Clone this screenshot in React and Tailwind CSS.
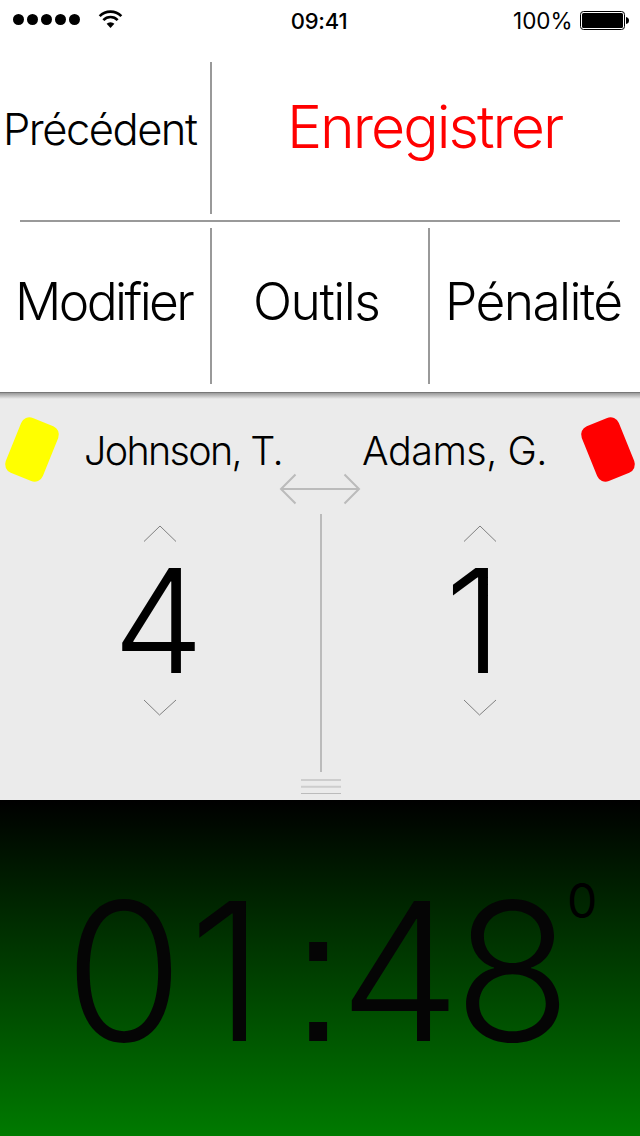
import React from "react";

function Wifi() {
  return (
    <svg width="25" height="19" viewBox="0 0 26 20" className="block">
      <g fill="none" stroke="#000" strokeWidth="2.8">
        <path d="M1.6 6.4 A16.2 16.2 0 0 1 24.4 6.4" />
        <path d="M5.5 10.6 A10.4 10.4 0 0 1 20.5 10.6" />
      </g>
      <path d="M13 19 L8.9 14.6 A5.8 5.8 0 0 1 17.1 14.6 Z" fill="#000" />
    </svg>
  );
}

function Battery() {
  return (
    <svg width="50" height="20" viewBox="0 0 50 20" className="block">
      <rect x="0.5" y="0.5" width="44" height="18" rx="3" fill="#fff" stroke="#000" />
      <rect x="2" y="2" width="41" height="15" rx="1.5" fill="#000" />
      <path d="M46 6 Q49 6.5 49 9.5 Q49 12.500 46 13 Z" fill="#000" />
    </svg>
  );
}

function StatusBar() {
  return (
    <header className="flex h-[62px] w-full items-start">
      <div className="flex w-[239px] items-center pt-[10px] pl-[13px]">
        <div className="flex gap-[3px]">
          {[0, 1, 2, 3, 4].map((i) => (
            <span key={i} className="h-[11px] w-[11px] rounded-full bg-black" />
          ))}
        </div>
        <div className="ml-[18px]">
          <Wifi />
        </div>
      </div>
      <div className="w-[160px] pt-[6px] text-center text-[22px] leading-[30px] font-medium tracking-[-0.2px]">09:41</div>
      <div className="flex w-[241px] pt-[6px] pl-[114px]">
        <span className="w-[67px] text-[22.500px] leading-[30px] font-normal">100%</span>
        <span className="pt-[5px]">
          <Battery />
        </span>
      </div>
    </header>
  );
}

function Chevron({ down }) {
  return (
    <svg width="34" height="18" viewBox="0 0 34 18" className="block">
      <path d={down ? "M1 1 L16.500 16 L33 1" : "M1 16.500 L17 1 L33 16.500"} fill="none" stroke="#808080" strokeWidth="1" />
    </svg>
  );
}

function Score({ value, pad }) {
  return (
    <div className="flex w-[320px] flex-col items-center pt-[15px]">
      <Chevron />
      <div className={"h-[156px] w-full text-[144.500px] leading-[156px] font-light " + pad}>{value}</div>
      <Chevron down />
    </div>
  );
}

export default function App() {
  return (
    <div className="flex h-[1136px] w-[640px] flex-col overflow-hidden bg-white font-['Inter','Liberation_Sans',sans-serif] text-black">
      <StatusBar />

      <section className="flex h-[158px] items-start whitespace-nowrap">
        <button className="h-[134px] w-[210px] pl-[3px] text-left text-[43.500px] leading-[134px] font-light tracking-[-1.5px]">Précédent</button>
        <div className="h-[152px] w-[2px] bg-[#999]" />
        <button className="h-[130px] w-[428px] pl-[75px] text-left text-[59px] leading-[130px] font-light tracking-[-2px] text-[#f00]">Enregistrer</button>
      </section>
      <div className="mx-5 h-[2px] shrink-0 bg-[#999]" />
      <section className="flex h-[170px] shrink-0 items-start pt-[6px] whitespace-nowrap">
        <button className="h-[146px] w-[210px] pl-[15px] text-left text-[51.500px] leading-[146px] font-light tracking-[-2.6px]">Modifier</button>
        <div className="h-[156px] w-[2px] bg-[#999]" />
        <button className="h-[146px] w-[216px] pl-[41px] text-left text-[51.500px] leading-[146px] font-light tracking-[-1.5px]">Outils</button>
        <div className="h-[156px] w-[2px] bg-[#999]" />
        <button className="h-[146px] w-[210px] pl-[15px] text-left text-[51.500px] leading-[146px] font-light tracking-[-1.6px]">Pénalité</button>
      </section>

      <main className="flex h-[408px] shrink-0 flex-col border-t border-[#777] bg-[#ebebeb] bg-linear-to-b/srgb from-[#999] to-[#ebebeb] to-[6px]">
        <div className="flex h-[80px] shrink-0 items-start whitespace-nowrap">
          <div className="flex w-[84px] pt-[27px] pl-[12px]">
            <div className="h-[59px] w-[40px] rotate-[22deg] rounded-[9px] bg-[#ff0]" />
          </div>
          <div className="w-[278px] pt-[28px] text-[39.500px] leading-[60px] font-light tracking-[-1.7px]">Johnson, T.</div>
          <div className="w-[226px] pt-[28px] text-[39.500px] leading-[60px] font-light tracking-[-0.5px]">Adams, G.</div>
          <div className="w-[52px] pt-[27px]">
            <div className="h-[59px] w-[40px] rotate-[-22deg] rounded-[9px] bg-[#f00]" />
          </div>
        </div>
        <div className="flex h-[37px] shrink-0 justify-center">
          <svg width="82" height="32" viewBox="0 0 82 32" className="block">
            <path d="M2 16 H80 M16.500 1.500 L2 16 L16.500 30.500 M65.500 1.500 L80 16 L65.500 30.500" fill="none" stroke="#bbb" strokeWidth="2" />
          </svg>
        </div>
        <div className="relative flex h-[290px] shrink-0">
          <Score value="4" pad="pl-[113px]" />
          <Score value="1" pad="pl-[125px]" />
          <div className="absolute top-[4px] left-[320px] h-[258px] w-[2px] bg-[#bbb]" />
          <svg width="40" height="18" viewBox="0 0 40 18" className="absolute top-[268px] left-[301px] block">
            <path d="M0 2 H40 M0 8.800 H40" fill="none" stroke="#cdcdcd" strokeWidth="2" />
            <path d="M0 15.500 H40" fill="none" stroke="#bbb" strokeWidth="1.2" />
          </svg>
        </div>
      </main>

      <footer className="flex h-[336px] shrink-0 items-start bg-linear-to-b/srgb from-black to-[#007a00] text-[192.500px] leading-[342px] font-light text-[#050505]">
        <span className="ml-[64px] flex w-[120px] justify-center">0</span>
        <span className="flex w-[80px] justify-center pl-[5px]">1</span>
        <span className="flex w-[81px] justify-center pl-[27px] font-['Liberation_Sans',sans-serif] text-[188px] leading-[352px]">:</span>
        <span className="flex w-[110px] justify-center">4</span>
        <span className="flex w-[112px] justify-center pl-[3px]">8</span>
        <span className="text-[48px] leading-[201px] font-normal text-black">0</span>
      </footer>
    </div>
  );
}
